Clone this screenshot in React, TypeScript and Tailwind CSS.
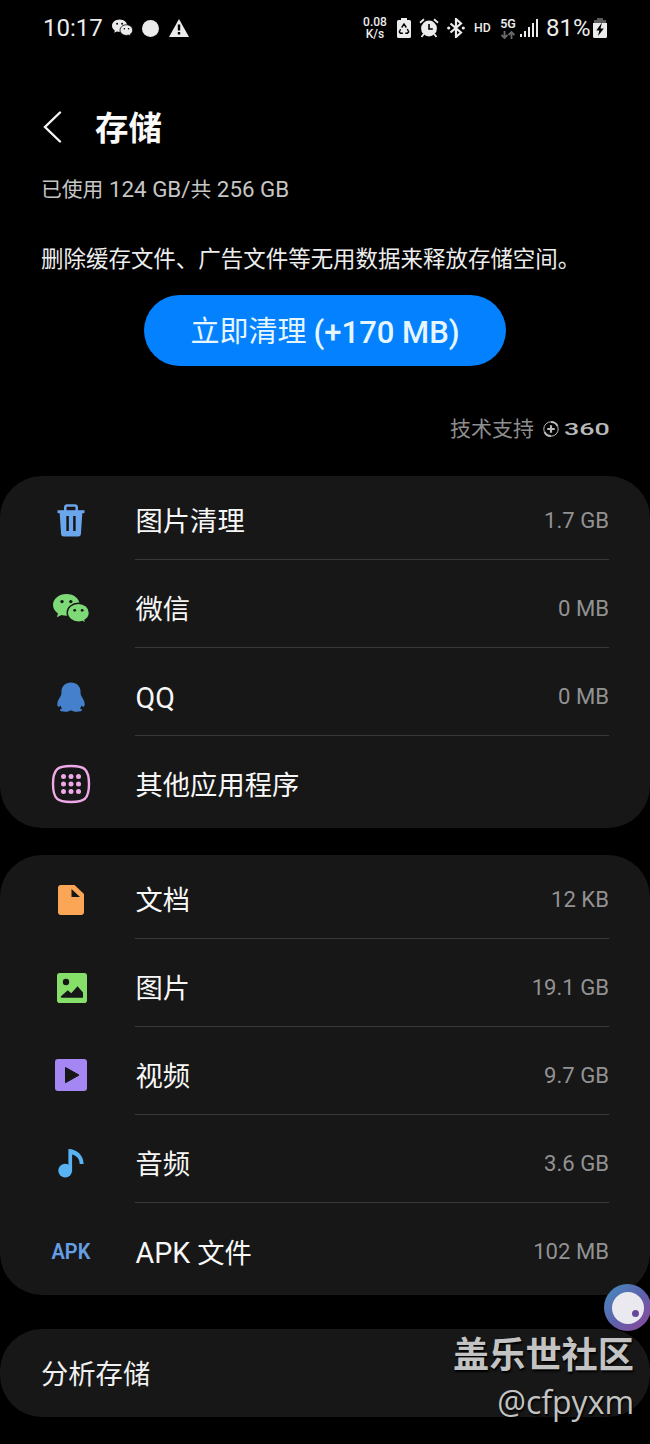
import type { ReactNode } from 'react';

type Item = {
  icon: ReactNode;
  label: ReactNode;
  size?: string;
};

function WeChatIcon({ className, eye }: { className: string; eye: string }) {
  return (
    <svg viewBox="0 0 37 30" className={className} fill="currentColor">
      <path d="M13.500 0C6 0 0 4.900 0 11c0 3.500 2 6.500 5 8.500L3.900 23.300l4.600-2.300c1.600.5 3.300.8 5 .8 7.500 0 13.200-4.900 13.200-10.900S21 0 13.500 0z" />
      <path
        d="M25.400 9.300c-6.200 0-11.200 4.200-11.200 9.400s5 9.400 11.200 9.400c1.400 0 2.800-.2 4-.6l3.500 1.900-.9-3.200c2.700-1.700 4.400-4.400 4.400-7.500 0-5.200-4.800-9.400-11-9.400z"
        stroke={eye}
        strokeWidth="1.400"
      />
      <g fill={eye}>
        <circle cx="9" cy="7.600" r="1.700" />
        <circle cx="17.800" cy="7.600" r="1.700" />
        <circle cx="21.700" cy="16.300" r="1.400" />
        <circle cx="29.200" cy="16.300" r="1.400" />
      </g>
    </svg>
  );
}

function TrashIcon() {
  return (
    <svg viewBox="0 0 28 33" className="h-[33px] w-7 text-[#6ba5ec]" fill="none">
      <path d="M8.300 7V3.200a1.700 1.700 0 0 1 1.700-1.700h8a1.700 1.700 0 0 1 1.700 1.700V7" stroke="currentColor" strokeWidth="2.600" />
      <path d="M.5 6.200h27v3H.500z" fill="currentColor" />
      <path d="M2.600 8h22.800l-1.500 22.200a2.600 2.600 0 0 1-2.600 2.400H6.700a2.600 2.600 0 0 1-2.600-2.400z" fill="currentColor" />
      <path d="M10.600 12v15M17.400 12v15" stroke="#171717" strokeWidth="2.500" />
    </svg>
  );
}

function PenguinIcon() {
  return (
    <svg viewBox="0 0 28 30" className="h-[30px] w-7 text-[#4480cb]" fill="currentColor">
      <path d="M14 .5c-5.600 0-9.600 3.800-9.600 9.200 0 1.300.1 2.300-.3 3.300C2.700 16 .3 18.700.3 22c0 1.800.5 2.700 1.100 2.700.8 0 1.500-.6 2-1.300.3 1.200.9 2.100 1.700 3-1.500.4-2.200 1-2.200 1.700 0 1.100 2.300 1.700 5.200 1.700 2.600 0 4.900-.6 5.900-1.500 1 .9 3.300 1.500 5.900 1.500 2.900 0 5.200-.6 5.200-1.700 0-.7-.7-1.300-2.200-1.700.8-.9 1.400-1.800 1.700-3 .5.7 1.200 1.300 2 1.300.6 0 1.100-.9 1.100-2.700 0-3.300-2.400-6-3.800-9-.4-1-.3-2-.3-3.300C23.600 4.300 19.600.5 14 .5z" />
    </svg>
  );
}

function AppsIcon() {
  return (
    <svg viewBox="0 0 40 40" className="mb-0.5 size-10 text-[#f0a9e8]" fill="currentColor">
      <path
        d="M20 2c-6 0-11 .3-14 3.300S2 14 2 20s1 11.700 4 14.700S14 38 20 38s11-.3 14-3.300S38 26 38 20s-1-11.700-4-14.700S26 2 20 2z"
        fill="none"
        stroke="currentColor"
        strokeWidth="2.400"
      />
      {[12.5, 20, 27.5].map((y) =>
        [12.5, 20, 27.5].map((x) => <circle key={`${x}-${y}`} cx={x} cy={y} r="2.500" />)
      )}
    </svg>
  );
}

function DocIcon() {
  return (
    <svg viewBox="0 0 26 30" className="h-[30px] w-[26px]">
      <path d="M3 0h13.500L26 9v18a3 3 0 0 1-3 3H3a3 3 0 0 1-3-3V3a3 3 0 0 1 3-3z" fill="#fba656" />
      <path d="M13.500 4v8H22z" fill="#171717" />
    </svg>
  );
}

function ImageIcon() {
  return (
    <svg viewBox="0 0 30 30" className="ml-px size-[30px]">
      <rect width="30" height="30" rx="2.800" fill="#85df68" />
      <circle cx="9" cy="9" r="3.200" fill="#171717" />
      <path d="M4 23.200l6.800-6 3.500 3 6.200-7L26 19.500v5.300H5.200c-1.300 0-1.700-.9-1.200-1.600z" fill="#171717" />
    </svg>
  );
}

function VideoIcon() {
  return (
    <svg viewBox="0 0 32 32" className="mb-0.5 size-8">
      <rect width="32" height="32" rx="3" fill="#a487f2" />
      <path d="M10.500 8.500v15.200L24 16.100z" fill="#171717" stroke="#171717" strokeLinejoin="round" />
    </svg>
  );
}

function MusicIcon() {
  return (
    <svg viewBox="0 0 26 29" className="h-[29px] w-[26px]">
      <circle cx="7.200" cy="21.600" r="6.900" fill="#59b3f3" />
      <path d="M10.400 0c8.500.3 15.200 6 15.200 15h-3.900c0-4.700-3-8.500-7.600-9.400v16h-3.700z" fill="#59b3f3" />
    </svg>
  );
}

const cleanItems: Item[] = [
  { icon: <TrashIcon />, label: '图片清理', size: '1.7 GB' },
  { icon: <WeChatIcon className="h-[30px] w-[37px] text-[#7ed977]" eye="#171717" />, label: '微信', size: '0 MB' },
  { icon: <PenguinIcon />, label: <span className="text-[28.600px]">QQ</span>, size: '0 MB' },
  { icon: <AppsIcon />, label: '其他应用程序' },
];

const fileItems: Item[] = [
  { icon: <DocIcon />, label: '文档', size: '12 KB' },
  { icon: <ImageIcon />, label: '图片', size: '19.1 GB' },
  { icon: <VideoIcon />, label: '视频', size: '9.7 GB' },
  { icon: <MusicIcon />, label: '音频', size: '3.6 GB' },
  {
    icon: <span className="inline-block scale-x-[.93] text-[21.500px] font-semibold leading-none text-[#669ee4]">APK</span>,
    label: (
      <>
        <span className="text-[28.600px]">APK </span>文件
      </>
    ),
    size: '102 MB',
  },
];

function Card({ items }: { items: Item[] }) {
  return (
    <section className="rounded-[42px] bg-[#171717] pr-[41px]">
      {items.map((item, i) => (
        <div key={i} className="flex h-[88px]">
          <div className="flex w-[135px] shrink-0 items-center justify-center pl-[7px] pt-px">{item.icon}</div>
          <div
            className={`flex h-[84px] flex-1 items-center justify-between border-b pt-[5px] ${
              i < items.length - 1 ? 'border-[#383838]' : 'border-transparent'
            }`}
          >
            <span className="pl-[.5px] pt-[6px] text-[27.3px] leading-none text-[#f7f7f7]">{item.label}</span>
            <span className="pt-px text-[22.100px] leading-none text-[#929292]">{item.size}</span>
          </div>
        </div>
      ))}
    </section>
  );
}

function StatusBar() {
  return (
    <header className="flex h-14 items-center justify-between pl-[43px] pr-[43px] text-[#ececec]">
      <div className="flex items-center">
        <span className="w-[69px] text-2xl leading-none">10:17</span>
        <WeChatIcon className="h-[18px] w-[21px]" eye="#000" />
        <span className="ml-[9px] size-[17px] rounded-full bg-[#ececec]" />
        <svg viewBox="0 0 20 18" className="ml-[10px] h-[18px] w-5">
          <path d="M10 0l10 18H0z" fill="currentColor" />
          <path d="M10 5.500v6M10 13v2.500" stroke="#000" strokeWidth="2.400" />
        </svg>
      </div>
      <div className="flex items-center">
        <div className="flex w-[26px] flex-col items-center text-[12px] font-medium leading-none">
          <span>0.08</span>
          <span>K/s</span>
        </div>
        {/* Battery with recycle mark */}
        <svg viewBox="0 0 14 20" className="ml-[9px] h-5 w-[14px]">
          <path d="M4 0h6v2h2.500A1.500 1.500 0 0 1 14 3.500v15a1.500 1.500 0 0 1-1.500 1.500h-11A1.500 1.500 0 0 1 0 18.500v-15A1.500 1.500 0 0 1 1.500 2H4z" fill="currentColor" />
          <path d="M4.700 9.500L7 6l2.300 3.500M10.300 11l1.400 2.800-1.300 1.400H8.300M5.900 15.200H3.400l-1.100-1.400L3.600 11.200" fill="none" stroke="#000" strokeWidth="1.400" />
        </svg>
        {/* Alarm */}
        <svg viewBox="0 0 20 20" className="ml-[8px] h-5 w-5" fill="none" stroke="currentColor">
          <circle cx="10" cy="10.500" r="7.900" fill="currentColor" stroke="none" />
          <path d="M1 4.800l4-3.500M19 4.800l-4-3.500M4.800 16l-2.300 3M15.200 16l2.300 3" strokeWidth="1.800" />
          <path d="M10 6v5h3.800" stroke="#000" strokeWidth="1.600" />
        </svg>
        {/* Bluetooth */}
        <svg viewBox="0 0 18 20" className="ml-[8px] h-5 w-[18px]" fill="none" stroke="currentColor">
          <path d="M3.500 5.500l10.500 9L9 19V1l5 4.500-10.500 9" strokeWidth="2.200" />
          <circle cx="1.700" cy="10" r="1.600" fill="currentColor" stroke="none" />
          <circle cx="16.300" cy="10" r="1.600" fill="currentColor" stroke="none" />
        </svg>
        <span className="ml-[9px] w-[17px] text-[12.300px] font-medium leading-none">HD</span>
        <div className="ml-[9px] flex w-4 flex-col items-center">
          <span className="text-[12.500px] font-semibold leading-[12px]">5G</span>
          <svg viewBox="0 0 14 8" className="mt-px h-2 w-[14px] text-[#6b6b6b]" fill="none" stroke="currentColor" strokeWidth="1.800">
            <path d="M3.500 0v7M.5 4l3 3 3-3M10.500 8V1M7.500 4l3-3 3 3" />
          </svg>
        </div>
        <svg viewBox="0 0 18 18" className="ml-1 h-[18px] w-[18px]" fill="currentColor">
          <path d="M0 15h2v3H0zM4 12h2v6H4zM8 8h2v10H8zM12 4h2v14h-2zM16 0h2v18h-2z" />
        </svg>
        <span className="ml-[8px] w-[44px] text-2xl leading-none">81%</span>
        <svg viewBox="0 0 14 20" className="ml-[3px] h-5 w-[14px]">
          <path d="M4 0h6v2h3v4H1V2h3z" fill="#5c5c5c" />
          <path d="M0 5h14v13.500a1.500 1.500 0 0 1-1.500 1.500h-11A1.500 1.500 0 0 1 0 18.500z" fill="currentColor" />
          <path d="M9 4.500L3.300 12.500h3L5 18l5.800-7.500H7.500z" fill="#000" />
        </svg>
      </div>
    </header>
  );
}

export default function App() {
  return (
    <div className="relative h-[1444px] w-[650px] overflow-hidden whitespace-nowrap bg-black font-[Roboto,'Noto_Sans_CJK_SC',sans-serif]">
      <StatusBar />

      <div className="mt-[42px] flex h-[58px] items-center pl-[43px]">
        <svg viewBox="0 0 19 32" className="h-8 w-[19px]" fill="none" stroke="#f5f5f5" strokeWidth="2.400" strokeLinecap="round">
          <path d="M17 1.500L2 16l15 14.500" />
        </svg>
        <h1 className="ml-[33px] pt-[3px] text-[33.500px] font-bold leading-none text-[#fafafa]">存储</h1>
      </div>

      <p className="mt-[18px] h-[30px] pl-[41px] text-[22.350px] leading-[30px] text-[#c6c6c6]">
        <span className="text-[20.800px]">已使用</span> 124 GB/<span className="text-[20.800px]">共</span> 256 GB
      </p>
      <p className="mt-10 pl-[41px] text-[22.470px] leading-[30px] text-[#ededed]">
        删除缓存文件、广告文件等无用数据来释放存储空间。
      </p>

      <button className="mx-auto mt-[21px] flex h-[71px] w-[362px] items-center justify-center rounded-full bg-[#0381fe] pt-[5px] text-[29px] text-[#e6f6ff]">
        立即清理&nbsp;<span className="text-[31px] font-medium">(+170 MB)</span>
      </button>

      <div className="mt-[47px] flex h-[30px] items-center pl-[450px] text-[#8e8e8e]">
        <span className="pt-[3px] text-[21px] leading-none">技术支持</span>
        <svg viewBox="0 0 16 16" className="ml-[9px] mt-0.5 size-4 shrink-0 text-[#b9b9b9]" fill="none" stroke="currentColor">
          <circle cx="8" cy="8" r="7.200" strokeWidth="1" />
          <path d="M1.500 11A7 7 0 0 0 8 15M14.500 5A7 7 0 0 0 8 1" strokeWidth="1.800" />
          <path d="M8 4.200v7.600M4.200 8h7.600" strokeWidth="2.200" />
        </svg>
        <span className="ml-[5px] mt-0.5 w-7 origin-left scale-x-[1.580] text-[17px] font-medium leading-none text-[#b9b9b9]">360</span>
      </div>

      <main className="mt-[33px] flex flex-col">
        <Card items={cleanItems} />
        <div className="mt-[27px]">
          <Card items={fileItems} />
        </div>
        <section className="mt-[34px] flex h-[88px] items-center rounded-[42px] bg-[#171717] pl-[41px] pt-[5px] text-[27.3px] text-[#f0f0f0]">
          分析存储
        </section>
      </main>

      {/* Floating assistant button */}
      <div className="absolute left-[604px] top-[1284px] flex size-[47px] items-center justify-center rounded-full bg-linear-to-br from-[#3a8fc0] via-[#5c62ad] to-[#8b4296]">
        <div className="relative size-8 rounded-full bg-[#ebe9f0]">
          <span className="absolute bottom-[7px] right-[5px] size-[7px] rounded-full bg-[#67479a]" />
        </div>
      </div>

      {/* Community watermark */}
      <div className="absolute right-4 top-[1333px] text-right text-[#c3c3c3] [text-shadow:1px_2px_2px_#000]">
        <div className="text-[36.200px] font-bold leading-[46px]">盖乐世社区</div>
        <div className="font-['Open_Sans'] text-[32px] leading-[45px]">@cfpyxm</div>
      </div>
    </div>
  );
}
